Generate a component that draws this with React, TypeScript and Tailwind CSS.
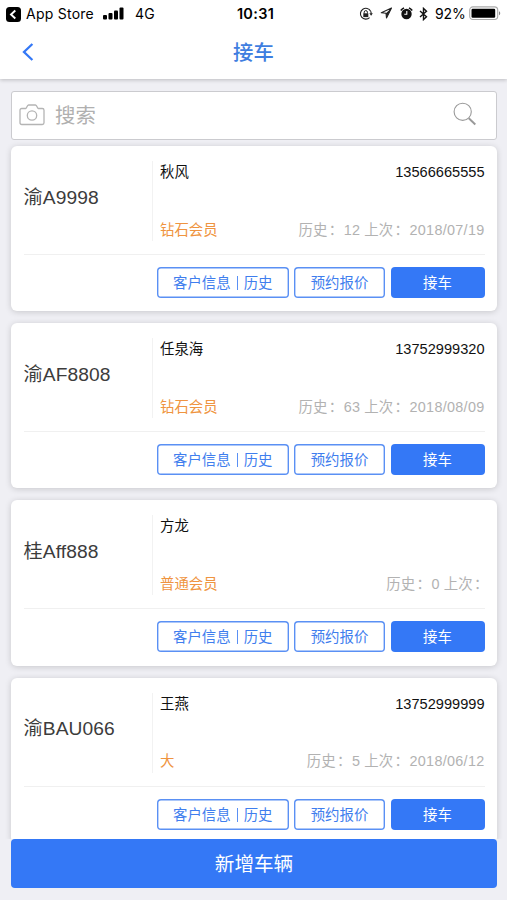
interface Vehicle {
    plate: string;
    name: string;
    phone: string;
    level: string;
    count: number;
    last: string;
}

const vehicles: Vehicle[] = [
    { plate: '渝A9998', name: '秋风', phone: '13566665555', level: '钻石会员', count: 12, last: '2018/07/19' },
    { plate: '渝AF8808', name: '任泉海', phone: '13752999320', level: '钻石会员', count: 63, last: '2018/08/09' },
    { plate: '桂Aff888', name: '方龙', phone: '', level: '普通会员', count: 0, last: '' },
    { plate: '渝BAU066', name: '王燕', phone: '13752999999', level: '大', count: 5, last: '2018/06/12' }
];

function StatusBar() {
    return (
        <div className="grid h-[27px] grid-cols-[1fr_auto_1fr] items-center px-[6px] pt-px font-['Inter',sans-serif] text-[14px] leading-none text-black">
            <div className="flex items-center">
                <svg width="15" height="15" viewBox="0 0 15 15">
                    <rect width="15" height="15" rx="3.5" fill="#000" />
                    <path d="M9.3 3.5 5 7.5l4.3 4" fill="none" stroke="#fff" strokeWidth="1.9" />
                </svg>
                <span className="ml-[5px] w-[69px] whitespace-nowrap tracking-[0.25px]">App Store</span>
                <svg width="21" height="13" viewBox="0 0 21 13" className="-mt-[2px] ml-[8px]">
                    <rect x="0" y="8" width="4" height="4.5" rx="1" />
                    <rect x="5.5" y="6" width="4" height="6.5" rx="1" />
                    <rect x="11" y="3.5" width="4" height="9" rx="1" />
                    <rect x="16.5" y="0.5" width="4" height="12" rx="1" />
                </svg>
                <span className="ml-[11px] tracking-[0.3px]">4G</span>
            </div>
            <span className="translate-x-[2px] text-[14.5px] font-semibold tracking-[0.3px]">10:31</span>
            <div className="flex items-center justify-end">
                {/* Rotation lock */}
                <svg width="14" height="14" viewBox="0 0 14 14" fill="none" stroke="#222" className="-mt-px">
                    <path d="M11.6 4.2A5.4 5.4 0 1 0 10.6 10.6" strokeWidth="1.1" />
                    <path d="M10.4 6.2h3.4L12.1 8.8z" fill="#222" stroke="none" />
                    <path d="M11.6 4.2q.6 1.2.6 2.5" strokeWidth="1.1" />
                    <rect x="4.3" y="6.3" width="5" height="3.8" fill="#222" stroke="none" />
                    <path d="M5.2 6.6V5.2a1.6 1.6 0 0 1 3.2 0v1.4" strokeWidth="1" />
                </svg>
                <svg width="13" height="12" viewBox="0 0 13 12" className="-mt-[2px] ml-[7px]">
                    <path d="M11.5 1 1.3 5.8l4.7.5.5 4.7z" fill="none" stroke="#222" strokeWidth="1.1" strokeLinejoin="round" />
                    <path d="M11.5 1 6 6.3l.5 4.7z" fill="#222" />
                </svg>
                {/* Alarm */}
                <svg width="13" height="13" viewBox="0 0 13 13" className="-mt-[2px] ml-[7px]">
                    <circle cx="6.5" cy="7" r="5.2" fill="#111" />
                    <path d="M.8 3.6A10 10 0 0 1 4 .9M12.2 3.6A10 10 0 0 0 9 .9" stroke="#111" strokeWidth="1.6" fill="none" />
                    <path d="M6.8 4v3.3H4.3" stroke="#fff" strokeWidth="1.1" fill="none" />
                </svg>
                <svg width="9" height="14" viewBox="0 0 9 14" className="-mt-px ml-[6px]">
                    <path d="m1 4 6.5 5.8L4.5 12.6V1.4l3 2.8L1 10" fill="none" stroke="#111" strokeWidth="1.4" />
                </svg>
                <span className="ml-[7px] w-[31px] whitespace-nowrap text-[14px] tracking-[-0.1px]">92%</span>
                <svg width="32" height="15" viewBox="0 0 32 15" className="-mt-[2px] ml-[3px]">
                    <rect x="0.7" y="0.9" width="28" height="12.6" rx="3.2" fill="#fff" stroke="#aaa" strokeWidth="1.1" />
                    <rect x="2.5" y="2.7" width="23.7" height="9" rx="1.2" />
                    <path d="M30 5.2c1.7.7 1.7 3.4 0 4.1z" fill="#888" />
                </svg>
            </div>
        </div>
    );
}

// Full-width colon, padded towards the middle of its cell, with a tight space after it
function Colon() {
    return <span className="pl-[1.5px] [word-spacing:-3.5px]">{'： '}</span>;
}

function VehicleCard({ vehicle }: { vehicle: Vehicle }) {
    return (
        <div className="h-[165.2px] shrink-0 rounded-[6px] bg-white pl-[13px] pr-[12.5px] pt-[15px] shadow-[0_1px_6px_rgba(0,0,0,0.17)]">
            <div className="flex h-[80px]">
                <div className="flex w-[129px] items-center border-r border-[#f2f2f2] pb-[6px] text-[19.2px] text-[#3c3c3c]">
                    <span className="-ml-[0.5px] tracking-[0.1px]">{vehicle.plate}</span>
                </div>
                <div className="flex flex-1 flex-col justify-between pb-[0.5px] pl-[7px] text-[14.4px] leading-[22px]">
                    <div className="flex justify-between text-[#111]">
                        <span>{vehicle.name}</span>
                        <span className="text-[14.6px]">{vehicle.phone}</span>
                    </div>
                    <div className="flex justify-between whitespace-nowrap">
                        <span className="text-[#ef9440]">{vehicle.level}</span>
                        <span className={vehicle.last ? 'text-[#b2b2b2]' : '-mr-[4px] text-[#b2b2b2]'}>
                            历史<Colon /><span className="tracking-[0.3px]">{vehicle.count}</span> 上次<Colon /><span className="tracking-[0.3px]">{vehicle.last}</span>
                        </span>
                    </div>
                </div>
            </div>
            <div className="mt-[13px] flex justify-end gap-[5.5px] border-t border-[#f0f0f0] pt-[12px] text-[14.4px] leading-[32px] text-[#3f7eee]">
                <button className="flex h-[31px] w-[131.5px] items-center justify-center rounded-[4px] pt-px shadow-[inset_0_0_0_1.4px_#5a90f4]">
                    客户信息<span className="mx-[6px] h-[14px] w-px bg-[#5a90f4]" />历史
                </button>
                <button className="h-[31px] w-[91px] rounded-[4px] shadow-[inset_0_0_0_1.4px_#5a90f4]">预约报价</button>
                <button className="h-[31px] w-[94px] rounded-[4px] bg-[#3478f6] text-white">接车</button>
            </div>
        </div>
    );
}

export default function App() {
    return (
        <div className="flex h-[900px] w-full flex-col overflow-hidden bg-[#efeff4] font-['Liberation_Sans','Noto_Sans_CJK_SC',sans-serif]">
            <header className="z-10 h-[79px] shrink-0 bg-white shadow-[0_1px_4px_rgba(0,0,0,0.22)]">
                <StatusBar />
                <div className="grid h-[50px] grid-cols-[1fr_auto_1fr] items-center">
                    <svg width="12" height="18" viewBox="0 0 12 18" className="ml-[22px]">
                        <path d="M10.4 1 2 9l8.4 8" fill="none" stroke="#3478f6" strokeWidth="2.3" />
                    </svg>
                    <h1 className="pt-px text-[20.4px] font-medium leading-[30px] text-[#3f7ee0]">接车</h1>
                </div>
            </header>

            <div className="mx-[11px] mt-[12px] flex h-[49px] w-[486px] shrink-0 items-center rounded-[3px] border border-[#cbcbcf] bg-white pl-[7px] pr-[19px]">
                <svg width="26" height="22" viewBox="0 0 26 22" fill="none" stroke="#b4b4b4" strokeWidth="1.3" className="-mt-px">
                    <path d="M2.7 4.5h4.1c.7 0 1.3-3.5 2.7-3.5h7c1.4 0 2 3.5 2.7 3.5h4.1c1 0 1.7.7 1.7 1.7v12.6c0 1-.7 1.7-1.7 1.7H2.7c-1 0-1.7-.7-1.7-1.7V6.2c0-1 .7-1.7 1.7-1.7z" />
                    <circle cx="13" cy="11.5" r="4.7" />
                </svg>
                <span className="ml-[10px] flex-1 pt-[2px] text-[20.4px] text-[#b0b0b0]">搜索</span>
                <svg width="24" height="24" viewBox="0 0 24 24" fill="none" stroke="#999" className="-mt-[3px]">
                    <circle cx="9.7" cy="9.8" r="8.6" strokeWidth="1.1" />
                    <path d="m15.8 16.2 6.5 6.3" strokeWidth="1.9" />
                </svg>
            </div>

            {/* The last card is cut off by the footer button */}
            <div className="-mt-[8px] flex h-[707px] shrink-0 flex-col gap-[12px] overflow-hidden pl-[11px] pr-[10px] pt-[14px]">
                {vehicles.map((vehicle) => (
                    <VehicleCard key={vehicle.plate} vehicle={vehicle} />
                ))}
            </div>

            <button className="mx-[11px] h-[49px] w-[486px] shrink-0 rounded-[4px] bg-[#3478f6] pt-px text-[19.6px] leading-[49px] text-white">
                新增车辆
            </button>
        </div>
    );
}
